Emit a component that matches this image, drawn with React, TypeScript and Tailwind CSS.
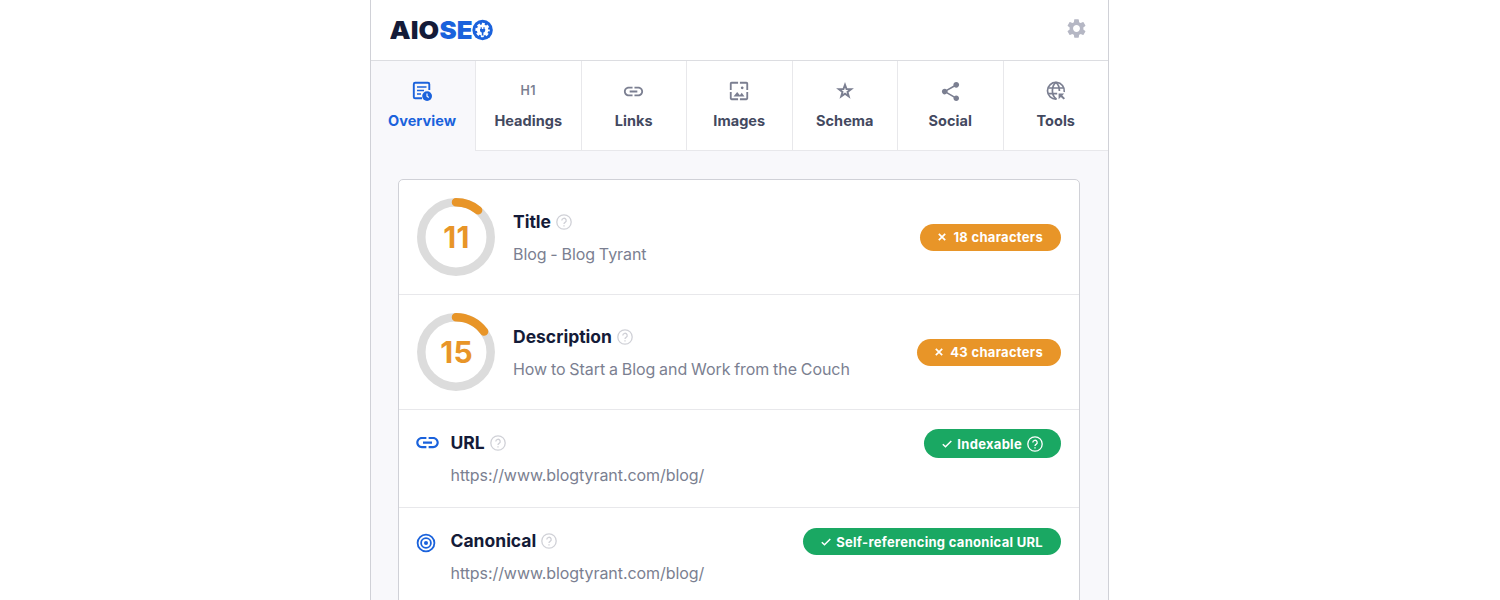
import React from 'react';
import { MdLink, MdSettings, MdShare, MdWallpaper } from 'react-icons/md';
import clsx from 'clsx';

function Logo() {
  return (
    <svg width="106" height="34" viewBox="0 0 106 34" className="font-[Inter,sans-serif]">
      <text x="-0.5" y="26" fontSize="24.5" fontWeight="900" fill="#141b38" textLength="49.5" lengthAdjust="spacingAndGlyphs">
        AIO
      </text>
      <text x="49.5" y="26" fontSize="24.5" fontWeight="900" fill="#1a62dc" textLength="33" lengthAdjust="spacingAndGlyphs">
        SE
      </text>
      <circle cx="92.6" cy="17" r="10.2" fill="#1a62dc" />
      <circle cx="92.6" cy="17" r="5.8" fill="#fff" />
      <circle cx="92.6" cy="17" r="6" fill="none" stroke="#fff" strokeWidth="2.4" strokeDasharray="2.8 1.912" strokeDashoffset="1.4" />
      {/* plug */}
      <path d="M91.2 14.200v2M94 14.200v2" stroke="#1a62dc" strokeWidth="1.200" />
      <path d="M90 16h5.200v1.300c0 1.200-.7 1.900-1.800 2.200v3h-1.600v-3c-1.100-.3-1.800-1-1.800-2.200z" fill="#1a62dc" />
    </svg>
  );
}

function OverviewIcon() {
  return (
    <svg width="22" height="22" viewBox="0 0 22 22" fill="none" stroke="currentColor" strokeWidth="1.9">
      <path d="M11 18.300H4.200a1.400 1.400 0 0 1-1.400-1.400V4.200a1.400 1.400 0 0 1 1.400-1.400h12.700a1.400 1.400 0 0 1 1.400 1.400V10" />
      <path d="M6 7h9.500M6 10.500h7M6 14h4" strokeWidth="1.700" />
      <circle cx="16.100" cy="16.100" r="4.900" fill="currentColor" stroke="none" />
      <path d="M16 13.400v2.900l1.700 1.300" stroke="#f8f8fb" strokeWidth="1.200" />
    </svg>
  );
}

function StarIcon() {
  return (
    <svg width="20" height="20" viewBox="0 0 20 20" fill="none" stroke="currentColor" strokeWidth="1.900">
      <path d="M10 3.700l1.550 4.300 4.650.1-3.700 2.850 1.300 4.450L10 12.750 6.200 15.400l1.300-4.450L3.800 8.100l4.650-.1z" />
    </svg>
  );
}

function ToolsIcon() {
  return (
    <svg width="22" height="22" viewBox="0 0 22 22" fill="none" stroke="currentColor" strokeWidth="1.700">
      <path d="M11.500 19.100A8.400 8.400 0 1 1 19.200 12" />
      <path d="M11.500 19c-2.600-1.500-4.100-4.500-4.100-8.200 0-3.800 1.400-6.800 3.500-8.200 2.100 1.400 3.500 4.400 3.500 8.400M3.200 8h15.400M3.200 13.600h9" />
      <path d="M13.600 13.600h5.600l-1.900 1.900 2.700 2.700-1.400 1.400-2.700-2.700-2.300 2.300z" fill="currentColor" stroke="none" />
    </svg>
  );
}

function CanonicalIcon() {
  return (
    <svg width="20" height="20" viewBox="0 0 20 20" fill="none" stroke="#1a62dc" strokeWidth="1.800">
      <circle cx="10" cy="10" r="8.400" />
      <circle cx="10" cy="10" r="4.900" />
      <circle cx="10" cy="10" r="2" fill="#1a62dc" stroke="none" />
    </svg>
  );
}

function HelpIcon({ light = false }: { light?: boolean }) {
  return (
    <svg
      width="16"
      height="16"
      viewBox="0 0 16 16"
      fill="none"
      stroke="currentColor"
      strokeWidth="1.300"
      className={clsx('shrink-0', light ? 'text-white' : 'text-[#d0d1d7]')}
    >
      <circle cx="8" cy="8" r="7.200" />
      <path d="M5.800 6.500a2.200 2.200 0 1 1 3.300 1.900c-.8.5-1.100.8-1.100 1.700" />
      <path d="M8 11.200v1.300" />
    </svg>
  );
}

function ScoreRing({ score }: { score: number }) {
  return (
    <div className="grid h-[79px] w-[79px] shrink-0 place-items-center">
      <svg width="79" height="79" viewBox="0 0 79 79" fill="none" strokeWidth="8.500" className="col-start-1 row-start-1">
        <circle cx="39" cy="39" r="34.700" stroke="#dcdcdc" />
        <circle
          cx="39"
          cy="39"
          r="34.700"
          stroke="#e89528"
          strokeLinecap="round"
          pathLength="100"
          strokeDasharray={`${score} 100`}
          transform="rotate(-90 39 39)"
        />
      </svg>
      <span className="col-start-1 row-start-1 text-[30px] leading-none font-bold tracking-[0.3px] text-[#e89528]">{score}</span>
    </div>
  );
}

function Badge({ ok = false, help = false, children }: { ok?: boolean; help?: boolean; children: React.ReactNode }) {
  return (
    <span
      className={clsx(
        'flex shrink-0 items-center rounded-full px-[18px] text-[13px] font-bold tracking-[0.3px] text-white',
        help ? 'h-[29px]' : 'h-[27px]',
        ok ? 'bg-[#1aa863]' : 'bg-[#e89528]',
      )}
    >
      {ok ? (
        <svg width="10" height="8" viewBox="0 0 10 8" fill="none" stroke="currentColor" strokeWidth="1.500" className="mr-[5px]">
          <path d="M.8 4.200l2.700 2.600L9.300 1" />
        </svg>
      ) : (
        <svg width="8" height="8" viewBox="0 0 8 8" fill="none" stroke="currentColor" strokeWidth="1.700" className="mr-[7px]">
          <path d="M.8.8l6.400 6.400M7.200.8L.8 7.200" />
        </svg>
      )}
      <span className="pt-0.5">{children}</span>
      {help && (
        <span className="ml-[5px]">
          <HelpIcon light />
        </span>
      )}
    </span>
  );
}

function Label({ title, value }: { title: string; value: string }) {
  return (
    <div className="pt-px">
      <div className="flex h-6 items-center gap-[5px]">
        <h2 className="text-[17.500px] leading-6 font-bold text-[#141b38]">{title}</h2>
        <HelpIcon />
      </div>
      <p className="mt-2 text-[16px] leading-6 tracking-[-0.07px] [word-spacing:-0.55px] whitespace-nowrap text-[#7b7f91]">{value}</p>
    </div>
  );
}

const tabs = [
  { label: 'Overview', icon: <OverviewIcon /> },
  { label: 'Headings', icon: <span className="text-[12.500px] font-semibold tracking-[0.4px]">H1</span> },
  { label: 'Links', icon: <MdLink size={23} /> },
  { label: 'Images', icon: <MdWallpaper size={22} /> },
  { label: 'Schema', icon: <StarIcon /> },
  { label: 'Social', icon: <MdShare size={23} /> },
  { label: 'Tools', icon: <ToolsIcon /> },
];

const scores = [
  { title: 'Title', value: 'Blog - Blog Tyrant', score: 11, badge: '18 characters' },
  { title: 'Description', value: 'How to Start a Blog and Work from the Couch', score: 15, badge: '43 characters' },
];

export default function App() {
  return (
    <div className="flex h-[600px] justify-center overflow-hidden bg-white pr-[21px] font-[Inter,sans-serif]">
      <div className="h-full w-[739px] border-x border-[#d0d1d7] bg-[#f8f8fb]">
        <header className="flex h-[60px] items-center justify-between bg-white pr-5 pl-[19px]">
          <Logo />
          <MdSettings size={23} className="mb-[3px] text-[#b5b7c4]" />
        </header>

        <nav className="grid h-[91px] grid-cols-[104px_repeat(6,1fr)] border-t border-[#dcdde1]">
          {tabs.map((tab, i) => (
            <div
              key={tab.label}
              className={clsx(
                'flex flex-col items-center pt-[18px]',
                i === 0 ? 'pr-0.5 text-[#1a62dc]' : 'border-b border-l border-[#e8e8eb] bg-white text-[#7b7f91]',
              )}
            >
              <div className="flex h-6 items-center">{tab.icon}</div>
              <span className={clsx('mt-2 text-[14.500px] leading-5 font-[650] tracking-[0.03px]', i > 0 && 'text-[#434960]')}>
                {tab.label}
              </span>
            </div>
          ))}
        </nav>

        <main className="mr-7 ml-[27px] mt-7 h-[460px] rounded-[5px] border border-[#d0d1d7] bg-white">
          {scores.map((row) => (
            <section key={row.title} className="flex h-[115px] items-center justify-between border-b border-[#e8e8eb] px-[18px]">
              <div className="flex items-center gap-[17px]">
                <ScoreRing score={row.score} />
                <Label title={row.title} value={row.value} />
              </div>
              <Badge>{row.badge}</Badge>
            </section>
          ))}

          <section className="flex h-[98px] items-start border-b border-[#e8e8eb] px-[18px] pt-[19px]">
            <div className="mt-[2px] w-[33.5px]">
              <MdLink size={27} className="-mt-[2px] -ml-[3px] text-[#1a62dc]" />
            </div>
            <div className="mt-px flex-1">
              <Label title="URL" value="https://www.blogtyrant.com/blog/" />
            </div>
            <Badge ok help>
              Indexable
            </Badge>
          </section>

          <section className="flex items-start px-[18px] pt-5">
            <div className="mt-[5px] -ml-px w-[34.5px]">
              <CanonicalIcon />
            </div>
            <div className="flex-1">
              <Label title="Canonical" value="https://www.blogtyrant.com/blog/" />
            </div>
            <Badge ok>Self-referencing canonical URL</Badge>
          </section>
        </main>
      </div>
    </div>
  );
}
